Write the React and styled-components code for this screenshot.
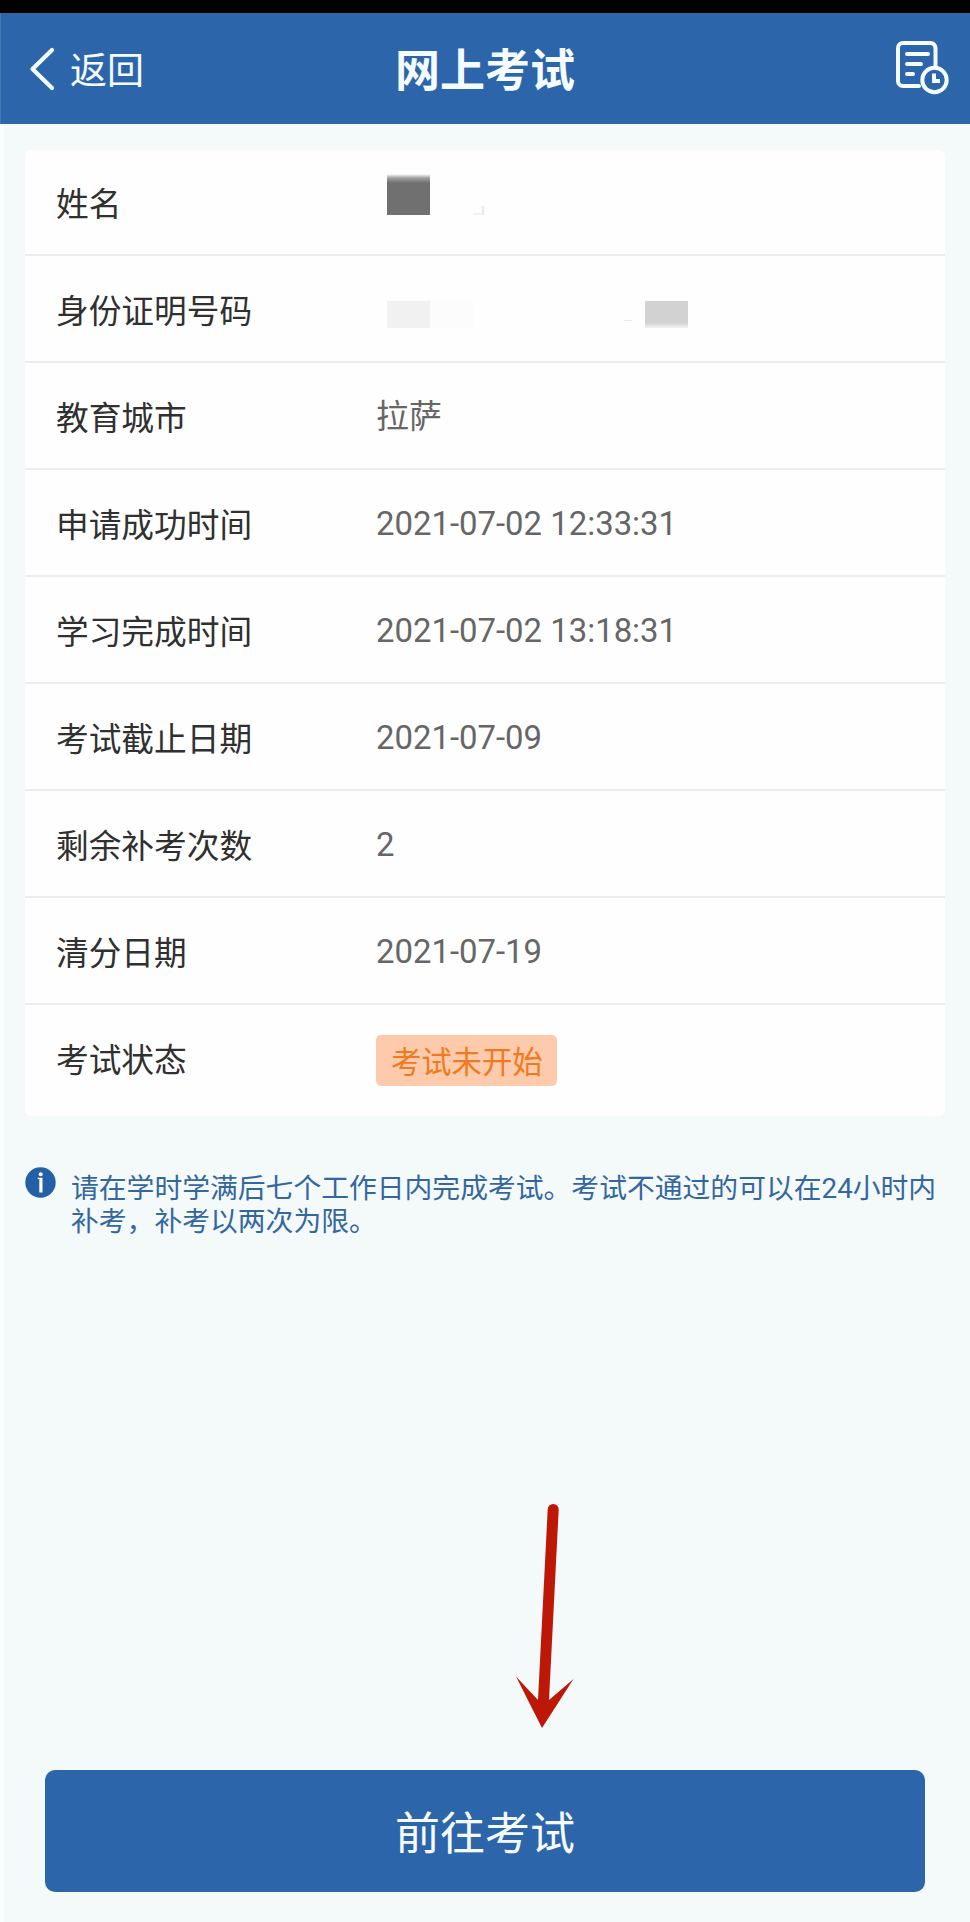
import React from "react";
import styled, { createGlobalStyle } from "styled-components";

const rows = [
  { label: "姓名", masked: "name" },
  { label: "身份证明号码", masked: "id" },
  { label: "教育城市", value: "拉萨" },
  { label: "申请成功时间", value: "2021-07-02 12:33:31" },
  { label: "学习完成时间", value: "2021-07-02 13:18:31" },
  { label: "考试截止日期", value: "2021-07-09" },
  { label: "剩余补考次数", value: "2" },
  { label: "清分日期", value: "2021-07-19" },
  { label: "考试状态", status: "考试未开始" },
];

const RecordIcon = () => (
  <svg width="56" height="56" viewBox="0 0 56 56" fill="none">
    <g stroke="#f4fcff" strokeWidth="4" strokeLinecap="round">
      <path d="M24 46H8a5 5 0 0 1-5-5V8a5 5 0 0 1 5-5H35.500a5 5 0 0 1 5 5V26" />
      <path d="M12 14H33M12 24H26M12 34H18" />
      <circle cx="39.500" cy="40" r="12.200" />
      <path d="M39 33.500V41H45" strokeLinecap="butt" />
    </g>
  </svg>
);

const Masked = ({ kind }) =>
  kind === "name" ? (
    <NameMask>
      <Block $shade="name" />
      <Corner />
    </NameMask>
  ) : (
    <IdMask>
      <Block $shade="light" />
      <Block $shade="faint" />
      <Dash />
      <Block $shade="mid" />
    </IdMask>
  );

const App = () => {
  return (
    <Page>
      <GlobalStyle />
      <StatusBar />
      <Header>
        <Back>
          <svg width="26" height="44" viewBox="0 0 26 44" fill="none">
            <path
              d="M23 3 3.500 22 23 41"
              stroke="#f4fcff"
              strokeWidth="4.200"
              strokeLinecap="round"
              strokeLinejoin="round"
            />
          </svg>
          <BackText>返回</BackText>
        </Back>
        <Title>网上考试</Title>
        <RecordButton>
          <RecordIcon />
        </RecordButton>
      </Header>
      <Content>
        <Card>
          {rows.map((row) => (
            <Row key={row.label}>
              <Label>{row.label}</Label>
              {row.value && <Value>{row.value}</Value>}
              {row.masked && <Masked kind={row.masked} />}
              {row.status && <Status>{row.status}</Status>}
            </Row>
          ))}
        </Card>
        <Notice>
          <InfoIcon width="31" height="31" viewBox="0 0 31 31">
            <circle cx="15.500" cy="15.500" r="15.200" fill="#2460a7" />
            <circle cx="15.700" cy="7.200" r="2" fill="#fff" />
            <path d="M12.700 10.800H17.500V25.500H14.300V12H12.700Z" fill="#fff" />
          </InfoIcon>
          <NoticeText>
            请在学时学满后七个工作日内完成考试。考试不通过的可以在24小时内补考，补考以两次为限。
          </NoticeText>
        </Notice>
        <Footer>
          <Pointer width="60" height="226" viewBox="0 0 60 226">
            <path
              d="M31.700 5.500a5.500 5.500 0 0 1 11 0L33 196 57.500 175 26 224 0 172.500 22 196Z"
              fill="#bd1708"
            />
          </Pointer>
          <StartButton>前往考试</StartButton>
        </Footer>
      </Content>
    </Page>
  );
};

export default App;

const GlobalStyle = createGlobalStyle`
  * {
    box-sizing: border-box;
  }

  body {
    margin: 0;
    background: #f4f9fa;
    font-family: Roboto, "Noto Sans CJK SC", sans-serif;
  }
`;

const Page = styled.div`
  display: flex;
  flex-direction: column;
  height: 1922px;
`;

const StatusBar = styled.div`
  height: 13px;
  background: #000;
`;

const Header = styled.header`
  display: grid;
  grid-template-columns: 1fr auto 1fr;
  align-items: center;
  height: 111px;
  padding: 0 19px 0 28px;
  background: #2c65aa;
  border-left: 1px solid #4478b4;
  color: #f4fcff;
`;

const Back = styled.div`
  display: flex;
  align-items: center;
  gap: 15px;
`;

const BackText = styled.span`
  padding-top: 6px;
  font-size: 37px;
  line-height: 44px;
`;

const Title = styled.h1`
  margin: 0 10px 0 0;
  padding-top: 7px;
  font-size: 45px;
  font-weight: 700;
  line-height: 60px;
`;

const RecordButton = styled.div`
  display: flex;
  justify-content: flex-end;
  padding-bottom: 1px;
`;

const Content = styled.main`
  display: flex;
  flex: 1;
  flex-direction: column;
  border-left: 4px solid #f9feff;
`;

const Card = styled.section`
  margin: 26px 25px 0 21px;
  background: #fefefe;
  border-radius: 6px;
`;

const Row = styled.div`
  display: flex;
  align-items: center;
  height: 107px;
  padding-left: 31px;
  border-bottom: 2px solid #ededef;

  &:first-child {
    height: 106px;
  }

  &:last-child {
    height: 111px;
    border-bottom: none;
  }
`;

const Label = styled.div`
  width: 320px;
  padding-bottom: 1px;
  font-size: 32.700px;
  color: #303030;

  ${Row}:first-child & {
    padding-bottom: 2px;
  }

  ${Row}:last-child & {
    padding-bottom: 7px;
  }
`;

const Value = styled.div`
  padding-top: 3px;
  font-size: 32.900px;
  line-height: 38px;
  color: #666;
`;

const Status = styled.div`
  height: 51px;
  padding: 0 15px;
  margin-bottom: 1px;
  border-radius: 5px;
  background: #fdcbab;
  color: #ef7a22;
  font-size: 30.300px;
  line-height: 56px;
`;

const NameMask = styled.div`
  display: flex;
  align-items: flex-end;
  gap: 43px;
  height: 40px;
  padding-left: 11px;
  margin-top: -14px;
`;

const IdMask = styled.div`
  display: flex;
  align-items: center;
  padding-left: 11px;
  margin-top: 11px;
`;

const shades = {
  name: "linear-gradient(#fefefe, #a0a0a0 4px, #707070 9px)",
  light: "#f1f1f1",
  faint: "#fcfcfc",
  mid: "linear-gradient(#d2d2d2 22px, #f3f3f3)",
};

const Block = styled.span`
  width: 43px;
  height: ${({ $shade }) => ($shade === "name" ? "41px" : "27px")};
  background: ${({ $shade }) => shades[$shade]};
`;

const Corner = styled.span`
  width: 11px;
  height: 9px;
  border-right: 2px solid #e8e8e8;
  border-bottom: 2px solid #f1f1f1;
`;

const Dash = styled.span`
  width: 8px;
  height: 1px;
  margin: 12px 13px 0 151px;
  background: #e8e8e8;
`;

const Notice = styled.div`
  display: flex;
  gap: 15px;
  padding: 51px 20px 0 21px;
`;

const InfoIcon = styled.svg`
  flex-shrink: 0;
`;

const NoticeText = styled.p`
  margin: 5px 0 0;
  font-size: 27.800px;
  line-height: 33px;
  color: #35679f;
`;

const Footer = styled.footer`
  display: flex;
  flex-direction: column;
  margin: auto 45px 30px 41px;
`;

const Pointer = styled.svg`
  margin: 0 0 40px 471px;
`;

const StartButton = styled.button`
  height: 122px;
  padding: 0 0 2px;
  border: none;
  border-radius: 10px;
  background: #2c65aa;
  color: #f4fcff;
  font-family: inherit;
  font-size: 45px;
`;
